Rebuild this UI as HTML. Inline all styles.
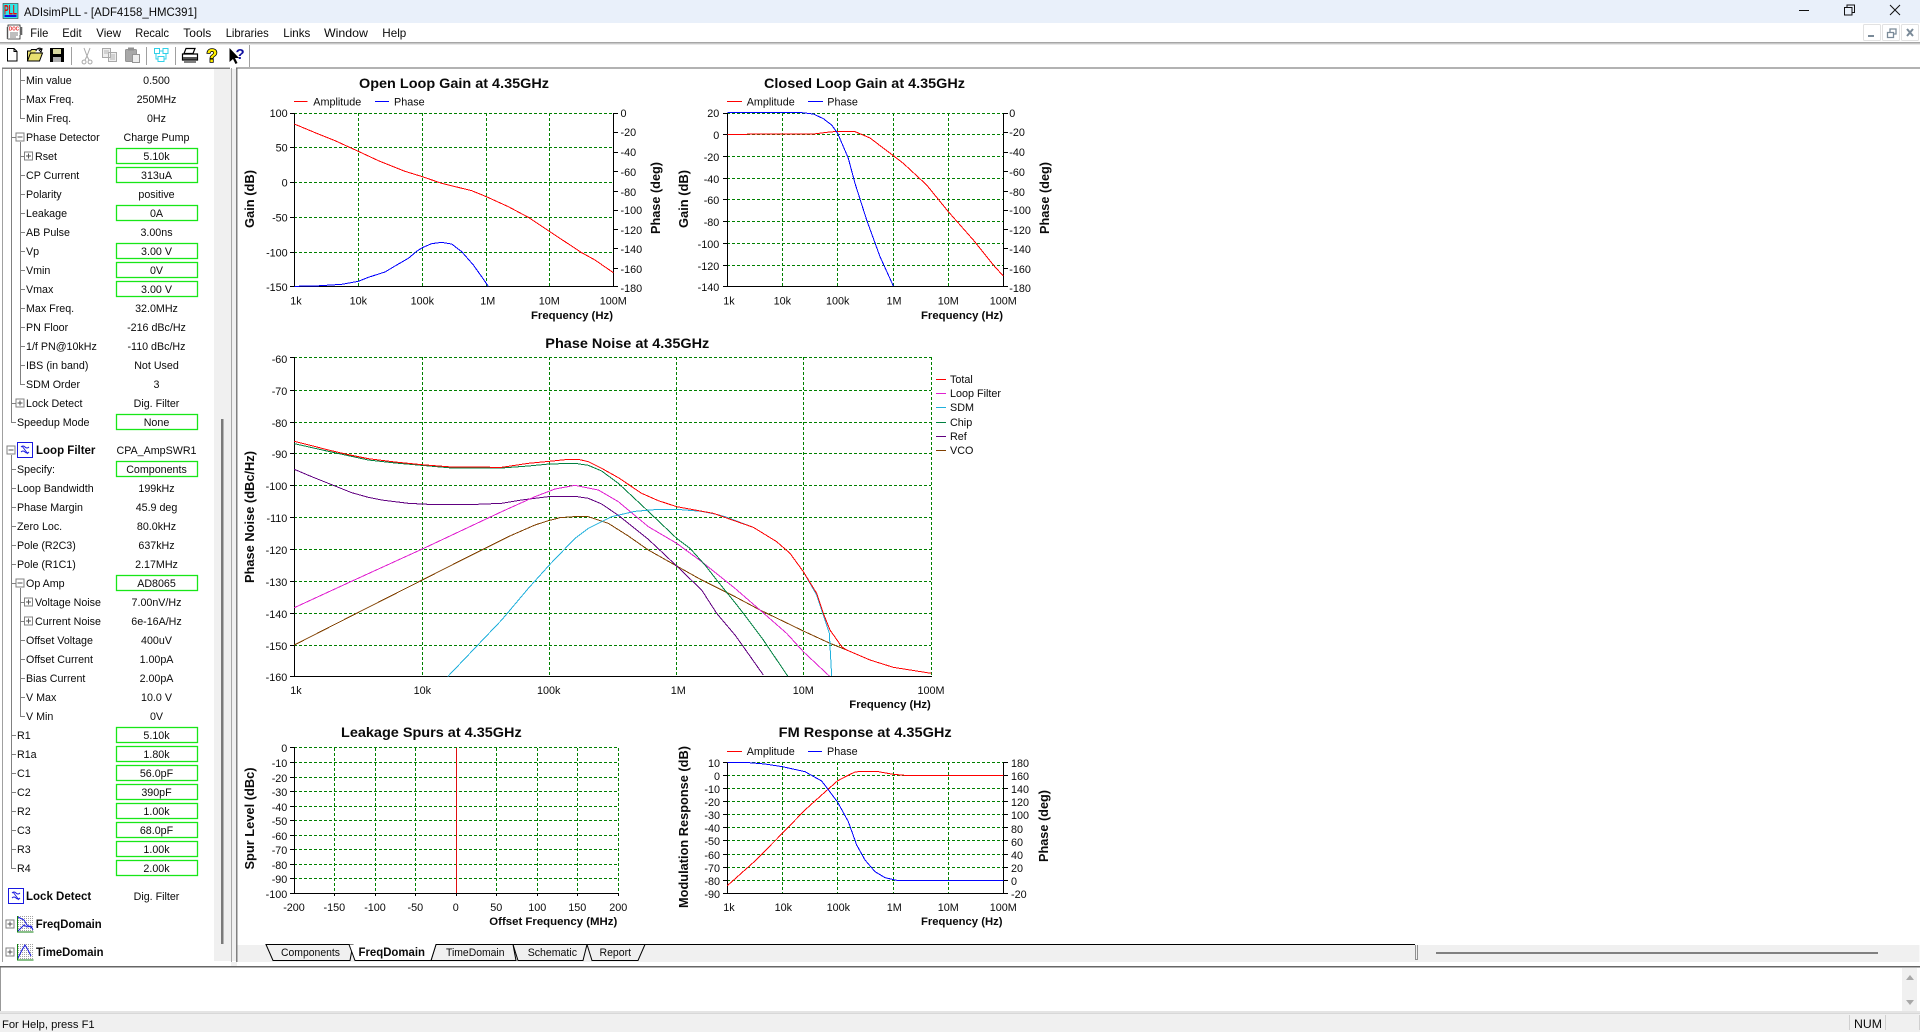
<!DOCTYPE html>
<html lang="en">
<head>
<meta charset="utf-8">
<title>ADIsimPLL - [ADF4158_HMC391]</title>
<style>
html,body{margin:0;padding:0;background:#fff;width:1920px;height:1032px;overflow:hidden}
svg{display:block;font-family:"Liberation Sans",Arial,sans-serif}
text{fill:#0a0a0a}
.s{font-size:10.7px}
.v{font-size:10.7px;text-anchor:middle}
.b{font-size:11.5px;font-weight:bold}
.m{font-size:12px}
.t{font-size:10.8px}
.e{text-anchor:end}
.c{text-anchor:middle}
.ti{font-size:14px;font-weight:bold}
.xl{font-size:11.3px;font-weight:bold}
.yl{font-size:13px;font-weight:bold}
.g{fill:none;stroke:#008000;stroke-width:1;stroke-dasharray:3 2}
.a{fill:none;stroke:#000;stroke-width:1}
.tr{fill:none;stroke:#808080;stroke-width:1}
.gb{fill:none;stroke:#18e618;stroke-width:1.3}
.l{fill:none;stroke-width:1;vector-effect:non-scaling-stroke;stroke-linejoin:round;shape-rendering:crispEdges}
.pb{fill:#fff;stroke:#808080;stroke-width:1}
</style>
</head>
<body>
<svg width="1920" height="1032" viewBox="0 0 1920 1032" xmlns="http://www.w3.org/2000/svg">
<defs>
<pattern id="dots" width="2" height="2" patternUnits="userSpaceOnUse"><rect width="1" height="1" fill="#a0a0a0"/></pattern>
</defs>
<rect width="1920" height="1032" fill="#fff"/>
<!-- title bar -->
<rect width="1920" height="23" fill="#e9f0fa"/>
<rect x="3" y="3.5" width="15" height="15" fill="#30e8e8" stroke="#333" stroke-width=".6"/>
<text x="4" y="14.500" style="font-size:14px;font-weight:bold;fill:#e80808" textLength="13" lengthAdjust="spacingAndGlyphs">PLL</text>
<rect x="4.500" y="15" width="12" height="2" fill="#1010e0"/>
<text x="24" y="16" style="font-size:12px" textLength="173" lengthAdjust="spacingAndGlyphs">ADIsimPLL - [ADF4158_HMC391]</text>
<path d="M1799 10.5h10" stroke="#111" fill="none"/>
<path d="M1844.5 7.500h7.500v7.500h-7.500zM1847 7.500v-2.500h7.500v7.500h-2.500" stroke="#111" fill="none"/>
<path d="M1890 5l10 10M1900 5l-10 10" stroke="#111" fill="none"/>
<!-- menu -->
<path d="M8 25h12v2l2 1-2 1 2 1-2 1 2 1-2 1 2 1-2 1v4H8l-1-1 1-1-1-1 1-1-1-1 1-1-1-1 1-1-1-1 1-1-1-1 1-1z" fill="#fff" stroke="#222" stroke-width=".8"/>
<text x="9" y="30.500" style="font-size:5.500px;font-weight:bold;fill:#e02020" textLength="10" lengthAdjust="spacingAndGlyphs">DOC</text>
<path d="M10 33h8M10 35h8M10 37h6" stroke="#555" stroke-width=".7"/>
<g class="m">
<text x="30.300" y="37" textLength="18" lengthAdjust="spacingAndGlyphs">File</text>
<text x="62.300" y="37" textLength="19.300" lengthAdjust="spacingAndGlyphs">Edit</text>
<text x="96.300" y="37" textLength="24.700" lengthAdjust="spacingAndGlyphs">View</text>
<text x="135.300" y="37" textLength="33.700" lengthAdjust="spacingAndGlyphs">Recalc</text>
<text x="183.300" y="37" textLength="28" lengthAdjust="spacingAndGlyphs">Tools</text>
<text x="225.700" y="37" textLength="43" lengthAdjust="spacingAndGlyphs">Libraries</text>
<text x="283.300" y="37" textLength="27" lengthAdjust="spacingAndGlyphs">Links</text>
<text x="324" y="37" textLength="44" lengthAdjust="spacingAndGlyphs">Window</text>
<text x="382.300" y="37" textLength="24" lengthAdjust="spacingAndGlyphs">Help</text>
</g>
<g fill="#fff" stroke="#e2e2e2">
<rect x="1863.500" y="24.500" width="17" height="16" rx="1"/>
<rect x="1882.500" y="24.500" width="17" height="16" rx="1"/>
<rect x="1901.500" y="24.500" width="17" height="16" rx="1"/>
</g>
<path d="M1868 36h6" stroke="#7a8a98" stroke-width="2"/>
<path d="M1887.500 32.500h6v5h-6zM1890 32v-3h6v5h-2" stroke="#7a8a98" stroke-width="1.300" fill="none"/>
<path d="M1907 29l6 7M1913 29l-6 7" stroke="#7a8a98" stroke-width="2" fill="none"/>
<rect y="42" width="1920" height="1.500" fill="#a6a6a6"/>
<rect y="43.500" width="1920" height="1.500" fill="#e8e8e8"/>
<!-- toolbar -->
<path d="M7.500 48.500h6.500l3 3v9.500h-9.500z" fill="#fff" stroke="#000"/>
<path d="M14 48.500v3h3" fill="none" stroke="#000"/>
<path d="M27.500 61l3-8h12l-3 8zM27.500 61v-10h3l1-1.500h4l1 1.500" fill="#e8e070" stroke="#000"/>
<path d="M36 50q3-3 6-1M42 49l-1 3-2-2z" fill="none" stroke="#000"/>
<rect x="50" y="48" width="14" height="14" fill="#000"/>
<rect x="53" y="49" width="8" height="5" fill="#d8d8a0"/>
<rect x="53" y="57" width="8" height="5" fill="#b0b0b0"/>
<rect x="71" y="47" width="1" height="18" fill="#a0a0a0"/>
<path d="M84 48l3 8 3-8M84 60a2 2 0 1 0 .1 0M90 60a2 2 0 1 0 .1 0M87 56l-2 4M87 56l2 4" fill="none" stroke="#a8a8a8" stroke-width="1"/>
<path d="M102.500 48.500h8v9h-8zM108.500 52.500h8v9h-8z" fill="#eee" stroke="#a8a8a8"/>
<path d="M104 51h5M104 53h5M110 55h5M110 57h5M110 59h5" stroke="#b4b4b4" fill="none"/>
<rect x="125.500" y="49.500" width="11" height="12" rx="1" fill="#a8a8a8" stroke="#949494"/>
<rect x="128" y="47.500" width="6" height="3" fill="#909090"/>
<rect x="132.500" y="54.500" width="7" height="8" fill="#eee" stroke="#949494"/>
<rect x="146" y="47" width="1" height="18" fill="#a0a0a0"/>
<path d="M154.500 48.500h5v5h-5zM163 48.500h5v5h-5zM159.500 51h3.500M158 56.500h6v5h-6zM156 53.500v5.500h2M166 53.500v5.500h-2" fill="none" stroke="#30d0e8" stroke-width="1"/>
<rect x="175" y="47" width="1" height="18" fill="#a0a0a0"/>
<path d="M186 48.500h9l-2 5h-9zM182.500 54h15v6h-15z" fill="#fff" stroke="#000" stroke-width="1.200"/>
<rect x="183" y="57" width="14" height="2.500" fill="#555"/>
<path d="M184 62h12" stroke="#000" stroke-width="1"/>
<text x="206.500" y="62" style="font-size:18px;font-weight:bold;fill:#ffee00;stroke:#000;stroke-width:1.600;paint-order:stroke">?</text>
<path d="M229.500 48v14l3.500-3 2.500 5 2-1-2.500-5h4z" fill="#000"/>
<text x="235.500" y="59" style="font-size:15px;font-weight:bold;fill:#1010a0">?</text>
<rect x="249" y="45" width="1" height="22" fill="#a0a0a0"/>
<!-- panes -->
<rect x="0" y="68" width="1920" height="899" fill="#fff"/>
<rect x="214" y="69" width="9" height="892" fill="#f0f0f0"/>
<rect x="223" y="69" width="13" height="892" fill="#f0f0f0"/>
<rect x="221" y="419" width="2.500" height="525" fill="#7a7a7a"/>
<rect x="2" y="68" width="1" height="894" fill="#a0a0a0"/>
<rect x="2" y="67.500" width="228" height="1.500" fill="#808080"/>
<rect x="231" y="68" width="1" height="894" fill="#a8a8a8"/>
<rect x="236" y="68" width="1.500" height="894" fill="#808080"/>
<rect x="236" y="67.500" width="1684" height="1" fill="#666"/>
<rect x="237.500" y="945" width="1682" height="17" fill="#f0f0f0"/>
<!-- tree lines -->
<path class="tr" d="M11.500 69V422.500H16M11.500 137.500H15.500M11.500 403.500H15.500"/>
<path class="tr" d="M20.500 69V118.500H25M20.500 80.500H25M20.500 99.500H25M20.500 142V384.500H25M20.500 175.500H25M20.500 194.500H25M20.500 213.500H25M20.500 232.500H25M20.500 251.500H25M20.500 270.500H25M20.500 289.500H25M20.500 308.500H25M20.500 327.500H25M20.500 346.500H25M20.500 365.500H25M20.500 156.500H24"/>
<path class="tr" d="M11.500 455V868.500H16M11.500 469.500H16M11.500 488.500H16M11.500 507.500H16M11.500 526.500H16M11.500 545.500H16M11.500 564.500H16M11.500 583.500H15.500M11.500 735.500H16M11.500 754.500H16M11.500 773.500H16M11.500 792.500H16M11.500 811.500H16M11.500 830.500H16M11.500 849.500H16"/>
<path class="tr" d="M20.500 588V716.500H25M20.500 602.500H24M20.500 621.500H24M20.500 640.500H25M20.500 659.500H25M20.500 678.500H25M20.500 697.500H25"/>
<!-- plus/minus boxes -->
<g>
<rect class="pb" x="16" y="133" width="8" height="8"/><path d="M17.500 137h5" stroke="#555"/>
<rect class="pb" x="24.500" y="152" width="8" height="8"/><path d="M26 156h5M28.500 153.500v5" stroke="#555"/>
<rect class="pb" x="16" y="399" width="8" height="8"/><path d="M17.500 403h5M20 400.500v5" stroke="#555"/>
<rect class="pb" x="7" y="446" width="8" height="8"/><path d="M8.500 450h5" stroke="#555"/>
<rect class="pb" x="16" y="579" width="8" height="8"/><path d="M17.500 583h5" stroke="#555"/>
<rect class="pb" x="24.500" y="598" width="8" height="8"/><path d="M26 602h5M28.500 599.500v5" stroke="#555"/>
<rect class="pb" x="24.500" y="617" width="8" height="8"/><path d="M26 621h5M28.500 618.500v5" stroke="#555"/>
<rect class="pb" x="6" y="920" width="8" height="8"/><path d="M7.500 924h5M10 921.500v5" stroke="#555"/>
<rect class="pb" x="6" y="948" width="8" height="8"/><path d="M7.500 952h5M10 949.500v5" stroke="#555"/>
</g>
<!-- green boxes -->
<g class="gb">
<rect x="116.500" y="148.500" width="81" height="15"/>
<rect x="116.500" y="167.500" width="81" height="15"/>
<rect x="116.500" y="205.500" width="81" height="15"/>
<rect x="116.500" y="243.500" width="81" height="15"/>
<rect x="116.500" y="262.500" width="81" height="15"/>
<rect x="116.500" y="281.500" width="81" height="15"/>
<rect x="116.500" y="414.500" width="81" height="15"/>
<rect x="116.500" y="461.500" width="81" height="15"/>
<rect x="116.500" y="575.500" width="81" height="15"/>
<rect x="116.500" y="727.500" width="81" height="15"/>
<rect x="116.500" y="746.500" width="81" height="15"/>
<rect x="116.500" y="765.500" width="81" height="15"/>
<rect x="116.500" y="784.500" width="81" height="15"/>
<rect x="116.500" y="803.500" width="81" height="15"/>
<rect x="116.500" y="822.500" width="81" height="15"/>
<rect x="116.500" y="841.500" width="81" height="15"/>
<rect x="116.500" y="860.500" width="81" height="15"/>
</g>
<!-- tree labels -->
<g class="s">
<text x="26" y="84">Min value</text>
<text x="26" y="103">Max Freq.</text>
<text x="26" y="122">Min Freq.</text>
<text x="26" y="141">Phase Detector</text>
<text x="35" y="160">Rset</text>
<text x="26" y="179">CP Current</text>
<text x="26" y="198">Polarity</text>
<text x="26" y="217">Leakage</text>
<text x="26" y="236">AB Pulse</text>
<text x="26" y="255">Vp</text>
<text x="26" y="274">Vmin</text>
<text x="26" y="293">Vmax</text>
<text x="26" y="312">Max Freq.</text>
<text x="26" y="331">PN Floor</text>
<text x="26" y="350">1/f PN@10kHz</text>
<text x="26" y="369">IBS (in band)</text>
<text x="26" y="388">SDM Order</text>
<text x="26" y="407">Lock Detect</text>
<text x="17" y="426">Speedup Mode</text>
<text x="17" y="473">Specify:</text>
<text x="17" y="492">Loop Bandwidth</text>
<text x="17" y="511">Phase Margin</text>
<text x="17" y="530">Zero Loc.</text>
<text x="17" y="549">Pole (R2C3)</text>
<text x="17" y="568">Pole (R1C1)</text>
<text x="26" y="587">Op Amp</text>
<text x="35" y="606">Voltage Noise</text>
<text x="35" y="625">Current Noise</text>
<text x="26" y="644">Offset Voltage</text>
<text x="26" y="663">Offset Current</text>
<text x="26" y="682">Bias Current</text>
<text x="26" y="701">V Max</text>
<text x="26" y="720">V Min</text>
<text x="17" y="739">R1</text>
<text x="17" y="758">R1a</text>
<text x="17" y="777">C1</text>
<text x="17" y="796">C2</text>
<text x="17" y="815">R2</text>
<text x="17" y="834">C3</text>
<text x="17" y="853">R3</text>
<text x="17" y="872">R4</text>
</g>
<g class="v">
<text x="156.500" y="84">0.500</text>
<text x="156.500" y="103">250MHz</text>
<text x="156.500" y="122">0Hz</text>
<text x="156.500" y="141">Charge Pump</text>
<text x="156.500" y="160">5.10k</text>
<text x="156.500" y="179">313uA</text>
<text x="156.500" y="198">positive</text>
<text x="156.500" y="217">0A</text>
<text x="156.500" y="236">3.00ns</text>
<text x="156.500" y="255">3.00 V</text>
<text x="156.500" y="274">0V</text>
<text x="156.500" y="293">3.00 V</text>
<text x="156.500" y="312">32.0MHz</text>
<text x="156.500" y="331">-216 dBc/Hz</text>
<text x="156.500" y="350">-110 dBc/Hz</text>
<text x="156.500" y="369">Not Used</text>
<text x="156.500" y="388">3</text>
<text x="156.500" y="407">Dig. Filter</text>
<text x="156.500" y="426">None</text>
<text x="156.500" y="454">CPA_AmpSWR1</text>
<text x="156.500" y="473">Components</text>
<text x="156.500" y="492">199kHz</text>
<text x="156.500" y="511">45.9 deg</text>
<text x="156.500" y="530">80.0kHz</text>
<text x="156.500" y="549">637kHz</text>
<text x="156.500" y="568">2.17MHz</text>
<text x="156.500" y="587">AD8065</text>
<text x="156.500" y="606">7.00nV/Hz</text>
<text x="156.500" y="625">6e-16A/Hz</text>
<text x="156.500" y="644">400uV</text>
<text x="156.500" y="663">1.00pA</text>
<text x="156.500" y="682">2.00pA</text>
<text x="156.500" y="701">10.0 V</text>
<text x="156.500" y="720">0V</text>
<text x="156.500" y="739">5.10k</text>
<text x="156.500" y="758">1.80k</text>
<text x="156.500" y="777">56.0pF</text>
<text x="156.500" y="796">390pF</text>
<text x="156.500" y="815">1.00k</text>
<text x="156.500" y="834">68.0pF</text>
<text x="156.500" y="853">1.00k</text>
<text x="156.500" y="872">2.00k</text>
<text x="156.500" y="900">Dig. Filter</text>
</g>
<rect x="17.500" y="442.500" width="15" height="15" fill="#fff" stroke="#1818e0"/>
<path d="M21 447q2-2 4 0t4 0M21 452q2-2 4 0t4 0M22 446l6 8" fill="none" stroke="#1818e0" stroke-width=".9"/>
<text class="b" x="36" y="454">Loop Filter</text>
<rect x="8.500" y="888.500" width="15" height="15" fill="#fff" stroke="#1818e0"/>
<path d="M12 893q2-2 4 0t4 0M12 898q2-2 4 0t4 0M13 892l6 8" fill="none" stroke="#1818e0" stroke-width=".9"/>
<text class="b" x="26" y="900">Lock Detect</text>
<rect x="17" y="916" width="16" height="16" fill="url(#dots)"/>
<path d="M17.500 916v16h16" fill="none" stroke="#108010"/>
<path d="M18 917l6 3 3 5 5 3" fill="none" stroke="#1818e0"/>
<path d="M18 931l6-6 3 2 4-1 2 4" fill="none" stroke="#1818e0"/>
<text class="b" x="35.700" y="928" textLength="66" lengthAdjust="spacingAndGlyphs">FreqDomain</text>
<rect x="17" y="944" width="16" height="16" fill="url(#dots)"/>
<path d="M17.500 944v16h16" fill="none" stroke="#108010"/>
<path d="M18 958l4-8 3-5 3 5 3 6" fill="none" stroke="#1818e0"/>
<text class="b" x="36" y="956" textLength="67.500" lengthAdjust="spacingAndGlyphs">TimeDomain</text>

<!-- ===== PLOT 1 ===== -->
<text class="ti" x="359" y="88" textLength="190" lengthAdjust="spacingAndGlyphs">Open Loop Gain at 4.35GHz</text>
<path d="M294 101.500h13.500" stroke="#f00"/><path d="M375 101.500h14" stroke="#00f"/>
<text class="t" x="313.300" y="105.500">Amplitude</text><text class="t" x="394" y="105.500">Phase</text>
<path class="g" d="M294 113.500H613M294 147.500H613M294 182.500H613M294 217.500H613M294 252.500H613M358.500 113V286M422.500 113V286M486.500 113V286M549.500 113V286"/>
<path class="a" d="M294.500 113V287M294 286.500H614M613.500 113V287"/>
<path class="a" d="M290 113.500h4M290 147.500h4M290 182.500h4M290 217.500h4M290 252.500h4M290 286.500h4M613 113.500h5M613 132.500h5M613 152.500h5M613 171.500h5M613 191.500h5M613 210.500h5M613 229.500h5M613 248.500h5M613 268.500h5M613 286.500h5"/>
<g transform="translate(235 70) scale(.33333)">
<path class="l" stroke="#00f" d="M178 649L240 648 320 643 370 634 400 622 450 606 480 588 520 565 545 544 562 533 590 521 620 517 650 522 680 545 715 585 740 620 760 649"/>
<path class="l" stroke="#f00" d="M178 162L245 190 300 212 370 244 430 272 510 304 562 320 620 340 710 362 754 380 820 410 880 442 943 484 1040 548 1080 570 1135 608"/>
</g>
<g class="t e">
<text x="287.700" y="117">100</text><text x="287.700" y="151.500">50</text><text x="287.700" y="186.500">0</text><text x="287.700" y="221.500">-50</text><text x="287.700" y="256.500">-100</text><text x="287.700" y="291">-150</text>
</g>
<g class="t">
<text x="620.500" y="117">0</text><text x="620.500" y="136">-20</text><text x="620.500" y="156">-40</text><text x="620.500" y="176">-60</text><text x="620.500" y="196">-80</text><text x="620.500" y="214">-100</text><text x="620.500" y="234">-120</text><text x="620.500" y="253">-140</text><text x="620.500" y="273">-160</text><text x="620.500" y="292">-180</text>
</g>
<g class="t c">
<text x="296" y="304.500">1k</text><text x="358.300" y="304.500">10k</text><text x="422.300" y="304.500">100k</text><text x="487.700" y="304.500">1M</text><text x="549.300" y="304.500">10M</text><text x="613.300" y="304.500">100M</text>
</g>
<text class="xl" x="531" y="319" textLength="82" lengthAdjust="spacingAndGlyphs">Frequency (Hz)</text>
<text class="yl" transform="translate(254 228) rotate(-90)" textLength="58" lengthAdjust="spacingAndGlyphs">Gain (dB)</text>
<text class="yl" transform="translate(660 234) rotate(-90)" textLength="72" lengthAdjust="spacingAndGlyphs">Phase (deg)</text>

<!-- ===== PLOT 2 ===== -->
<text class="ti" x="764" y="88" textLength="201" lengthAdjust="spacingAndGlyphs">Closed Loop Gain at 4.35GHz</text>
<path d="M727 101.500h15" stroke="#f00"/><path d="M808 101.500h15" stroke="#00f"/>
<text class="t" x="746.700" y="105.500">Amplitude</text><text class="t" x="827.300" y="105.500">Phase</text>
<path class="g" d="M727 113.500H1003M727 134.500H1003M727 156.500H1003M727 178.500H1003M727 199.500H1003M727 221.500H1003M727 243.500H1003M727 265.500H1003M782.500 113V286M837.500 113V286M893.500 113V286M948.500 113V286"/>
<path class="a" d="M727.500 113V287M727 286.500H1004M1003.500 113V287"/>
<path class="a" d="M723 113.500h4M723 134.500h4M723 156.500h4M723 178.500h4M723 199.500h4M723 221.500h4M723 243.500h4M723 265.500h4M723 286.500h4M1003 113.500h5M1003 132.500h5M1003 152.500h5M1003 171.500h5M1003 191.500h5M1003 210.500h5M1003 229.500h5M1003 248.500h5M1003 268.500h5M1003 286.500h5"/>
<g transform="translate(680 70) scale(.33333)">
<path class="l" stroke="#f00" d="M142 193L400 192 440 187 473 184 523 184 570 204 640 257 670 280 740 345 805 425 880 510 940 585 970 618"/>
<path class="l" stroke="#00f" d="M142 128L365 128 400 132 430 146 455 165 473 190 505 265 525 340 560 450 600 560 640 648"/>
</g>
<g class="t e">
<text x="719.300" y="117">20</text><text x="719.300" y="139">0</text><text x="719.300" y="161">-20</text><text x="719.300" y="183">-40</text><text x="719.300" y="204">-60</text><text x="719.300" y="226">-80</text><text x="719.300" y="248">-100</text><text x="719.300" y="270">-120</text><text x="719.300" y="291">-140</text>
</g>
<g class="t">
<text x="1009.300" y="117">0</text><text x="1009.300" y="136">-20</text><text x="1009.300" y="156">-40</text><text x="1009.300" y="176">-60</text><text x="1009.300" y="196">-80</text><text x="1009.300" y="214">-100</text><text x="1009.300" y="234">-120</text><text x="1009.300" y="253">-140</text><text x="1009.300" y="273">-160</text><text x="1009.300" y="292">-180</text>
</g>
<g class="t c">
<text x="729" y="304.500">1k</text><text x="782.300" y="304.500">10k</text><text x="837.700" y="304.500">100k</text><text x="894" y="304.500">1M</text><text x="948.300" y="304.500">10M</text><text x="1003.300" y="304.500">100M</text>
</g>
<text class="xl" x="921" y="319" textLength="82" lengthAdjust="spacingAndGlyphs">Frequency (Hz)</text>
<text class="yl" transform="translate(688 228) rotate(-90)" textLength="58" lengthAdjust="spacingAndGlyphs">Gain (dB)</text>
<text class="yl" transform="translate(1049 234) rotate(-90)" textLength="72" lengthAdjust="spacingAndGlyphs">Phase (deg)</text>

<!-- ===== PLOT 3 ===== -->
<text class="ti" x="545.300" y="348" textLength="164" lengthAdjust="spacingAndGlyphs">Phase Noise at 4.35GHz</text>
<path class="g" d="M294 357.500H931M294 390.500H931M294 422.500H931M294 453.500H931M294 485.500H931M294 517.500H931M294 549.500H931M294 581.500H931M294 613.500H931M294 645.500H931M422.500 357V676M549.500 357V676M676.500 357V676M803.500 357V676M931.500 357V676"/>
<path class="a" d="M294.500 357V677M294 676.500H932"/>
<path class="a" d="M290 357.500h4M290 390.500h4M290 422.500h4M290 453.500h4M290 485.500h4M290 517.500h4M290 549.500h4M290 581.500h4M290 613.500h4M290 645.500h4M290 676.500h4"/>
<g transform="translate(235 330) scale(.33333)">
<path class="l" stroke="#804000" d="M178 945L280 893 400 832 562 750 700 680 820 620 900 585 940 572 975 563 1030 559 1060 560 1120 580 1180 618 1240 660 1325 708 1400 750 1500 800 1575 840 1705 903 1785 940 1835 960"/>
<path class="l" stroke="#600080" d="M178 418L230 440 280 460 350 488 400 502 440 510 520 520 580 523 700 524 800 520 860 510 940 500 1020 499 1060 505 1100 522 1150 556 1240 628 1325 708 1400 780 1445 850 1500 915 1525 950 1585 1035"/>
<path class="l" stroke="#e020d0" d="M178 833L280 786 380 740 562 657 800 545 900 500 960 477 1020 466 1090 480 1150 515 1240 590 1325 640 1400 695 1500 775 1575 840 1655 910 1705 965 1783 1038"/>
<path class="l" stroke="#008040" d="M178 341L280 364 400 390 480 399 560 406 650 414 800 414 880 408 943 402 1020 400 1060 406 1100 423 1150 460 1225 530 1325 625 1365 655 1410 705 1445 750 1500 818 1525 850 1585 930 1658 1038"/>
<path class="l" stroke="#20b0dc" d="M638 1040L700 975 800 870 880 775 943 705 1020 625 1060 595 1130 560 1200 544 1270 538 1325 538 1400 544 1440 552 1470 560 1555 592 1625 635 1665 670 1705 725 1745 795 1765 855 1783 910 1790 1038"/>
<path class="l" stroke="#f00" d="M178 334L230 347 280 360 340 374 400 386 480 396 560 404 650 411 800 412 880 400 943 394 1000 388 1030 388 1060 395 1100 415 1150 443 1220 490 1270 512 1325 530 1435 550 1555 592 1625 635 1665 670 1705 725 1745 790 1765 850 1785 900 1820 950 1835 960 1905 990 1975 1012 2089 1030"/>
</g>
<g class="t e">
<text x="287.300" y="363">-60</text><text x="287.300" y="395">-70</text><text x="287.300" y="427">-80</text><text x="287.300" y="458">-90</text><text x="287.300" y="490">-100</text><text x="287.300" y="522">-110</text><text x="287.300" y="554">-120</text><text x="287.300" y="586">-130</text><text x="287.300" y="618">-140</text><text x="287.300" y="650">-150</text><text x="287.300" y="681">-160</text>
</g>
<g class="t c">
<text x="296" y="694">1k</text><text x="422.300" y="694">10k</text><text x="548.700" y="694">100k</text><text x="678.300" y="694">1M</text><text x="803.300" y="694">10M</text><text x="931" y="694">100M</text>
</g>
<text class="xl" x="849.300" y="708" textLength="81.500" lengthAdjust="spacingAndGlyphs">Frequency (Hz)</text>
<text class="yl" transform="translate(254 583) rotate(-90)" textLength="132" lengthAdjust="spacingAndGlyphs">Phase Noise (dBc/Hz)</text>
<path d="M936 379.500h10" stroke="#f00"/><path d="M936 393.500h10" stroke="#e020d0"/><path d="M936 407.500h10" stroke="#20b0dc"/><path d="M936 422.500h10" stroke="#008040"/><path d="M936 436.500h10" stroke="#600080"/><path d="M936 450.500h10" stroke="#804000"/>
<g class="t">
<text x="950" y="383">Total</text><text x="950" y="397">Loop Filter</text><text x="950" y="411">SDM</text><text x="950" y="426">Chip</text><text x="950" y="440">Ref</text><text x="950" y="454">VCO</text>
</g>

<!-- ===== PLOT 4 ===== -->
<text class="ti" x="341" y="737" textLength="180.700" lengthAdjust="spacingAndGlyphs">Leakage Spurs at 4.35GHz</text>
<path class="g" d="M294 747.500H618M294 762.500H618M294 777.500H618M294 791.500H618M294 806.500H618M294 820.500H618M294 835.500H618M294 849.500H618M294 864.500H618M294 878.500H618M334.500 748V893M375.500 748V893M415.500 748V893M496.500 748V893M537.500 748V893M577.500 748V893M618.500 748V893"/>
<path class="a" d="M294.500 747V894M294 893.500H619"/>
<path class="a" d="M290 747.500h4M290 762.500h4M290 777.500h4M290 791.500h4M290 806.500h4M290 820.500h4M290 835.500h4M290 849.500h4M290 864.500h4M290 878.500h4M290 893.500h4M334.500 893v3M375.500 893v3M415.500 893v3M456.500 893v3M496.500 893v3M537.500 893v3M577.500 893v3M618.500 893v3"/>
<path d="M456.500 748V893" stroke="#e01010" stroke-width="1"/>
<g class="t e">
<text x="287.300" y="752">0</text><text x="287.300" y="767">-10</text><text x="287.300" y="782">-20</text><text x="287.300" y="796">-30</text><text x="287.300" y="811">-40</text><text x="287.300" y="825">-50</text><text x="287.300" y="840">-60</text><text x="287.300" y="854">-70</text><text x="287.300" y="869">-80</text><text x="287.300" y="883">-90</text><text x="287.300" y="898">-100</text>
</g>
<g class="t c">
<text x="294" y="911">-200</text><text x="334.300" y="911">-150</text><text x="375" y="911">-100</text><text x="415.300" y="911">-50</text><text x="455.700" y="911">0</text><text x="496.300" y="911">50</text><text x="537.300" y="911">100</text><text x="577.300" y="911">150</text><text x="618.300" y="911">200</text>
</g>
<text class="xl" x="489.300" y="925" textLength="128" lengthAdjust="spacingAndGlyphs">Offset Frequency (MHz)</text>
<text class="yl" transform="translate(254 869.500) rotate(-90)" textLength="102" lengthAdjust="spacingAndGlyphs">Spur Level (dBc)</text>

<!-- ===== PLOT 5 ===== -->
<text class="ti" x="778.700" y="737" textLength="173" lengthAdjust="spacingAndGlyphs">FM Response at 4.35GHz</text>
<path d="M727 751.500h15" stroke="#f00"/><path d="M808 751.500h14" stroke="#00f"/>
<text class="t" x="746.700" y="755">Amplitude</text><text class="t" x="827" y="755">Phase</text>
<path class="g" d="M727 762.500H1003M727 775.500H1003M727 788.500H1003M727 801.500H1003M727 814.500H1003M727 827.500H1003M727 840.500H1003M727 854.500H1003M727 867.500H1003M727 880.500H1003M782.500 762V893M837.500 762V893M893.500 762V893M948.500 762V893"/>
<path class="a" d="M727.500 762V894M727 893.500H1004M1003.500 762V894"/>
<path class="a" d="M723 762.500h4M723 775.500h4M723 788.500h4M723 801.500h4M723 814.500h4M723 827.500h4M723 840.500h4M723 854.500h4M723 867.500h4M723 880.500h4M723 893.500h4M1003 762.500h5M1003 775.500h5M1003 788.500h5M1003 801.500h5M1003 814.500h5M1003 827.500h5M1003 840.500h5M1003 854.500h5M1003 867.500h5M1003 880.500h5M1003 893.500h5"/>
<g transform="translate(665 715) scale(.33333)">
<path class="l" stroke="#f00" d="M187 512L270 438 352 355 420 285 470 240 517 198 545 183 570 171 590 169 640 170 685 178 720 181 1015 181"/>
<path class="l" stroke="#00f" d="M187 142L240 142 300 147 352 155 420 170 470 198 517 260 550 320 575 390 600 435 630 470 660 488 695 496 1015 496"/>
</g>
<g class="t e">
<text x="720" y="767">10</text><text x="720" y="780">0</text><text x="720" y="793">-10</text><text x="720" y="806">-20</text><text x="720" y="819">-30</text><text x="720" y="832">-40</text><text x="720" y="845">-50</text><text x="720" y="859">-60</text><text x="720" y="872">-70</text><text x="720" y="885">-80</text><text x="720" y="898">-90</text>
</g>
<g class="t">
<text x="1011" y="767">180</text><text x="1011" y="780">160</text><text x="1011" y="793">140</text><text x="1011" y="806">120</text><text x="1011" y="819">100</text><text x="1011" y="833">80</text><text x="1011" y="846">60</text><text x="1011" y="859">40</text><text x="1011" y="872">20</text><text x="1011" y="885">0</text><text x="1011" y="898">-20</text>
</g>
<g class="t c">
<text x="729" y="911">1k</text><text x="783.300" y="911">10k</text><text x="838.300" y="911">100k</text><text x="894.300" y="911">1M</text><text x="948.300" y="911">10M</text><text x="1003.300" y="911">100M</text>
</g>
<text class="xl" x="921" y="925" textLength="81.500" lengthAdjust="spacingAndGlyphs">Frequency (Hz)</text>
<text class="yl" transform="translate(688 908) rotate(-90)" textLength="162" lengthAdjust="spacingAndGlyphs">Modulation Response (dB)</text>
<text class="yl" transform="translate(1048 862) rotate(-90)" textLength="72" lengthAdjust="spacingAndGlyphs">Phase (deg)</text>

<!-- ===== TABS ===== -->
<path d="M437 944.500H1415" stroke="#000"/>
<path d="M1415.500 945V959M1417.500 945V959.500H1415" fill="none" stroke="#909090"/>
<rect x="1436" y="952" width="442" height="2" fill="#808080"/>
<path d="M266 944.500L273 960.500H350L353 944.500Z" fill="#f0f0f0" stroke="#000"/>
<path d="M513 944.500L518 960.500H583L587 944.500Z" fill="#f0f0f0" stroke="#000"/>
<path d="M587 944.500L592 960.500H638L645 944.500Z" fill="#f0f0f0" stroke="#000"/>
<path d="M436 944.500L431 960.500H516L513 944.500Z" fill="#f0f0f0" stroke="#000"/>
<path d="M349 944.500L355 960.500H431L436 944.500" fill="#fff" stroke="#000"/>
<g style="font-size:11px">
<text x="281" y="956" textLength="59" lengthAdjust="spacingAndGlyphs">Components</text>
<text x="446" y="956" textLength="58.500" lengthAdjust="spacingAndGlyphs">TimeDomain</text>
<text x="527.700" y="956" textLength="49.300" lengthAdjust="spacingAndGlyphs">Schematic</text>
<text x="599.500" y="956" textLength="31.500" lengthAdjust="spacingAndGlyphs">Report</text>
</g>
<text x="358.500" y="956" style="font-size:11.500px;font-weight:bold" textLength="66.500" lengthAdjust="spacingAndGlyphs">FreqDomain</text>

<!-- ===== OUTPUT + STATUS ===== -->
<rect x="0" y="962" width="1920" height="4" fill="#fff"/>
<rect x="231" y="962" width="6" height="4" fill="#f0f0f0"/>
<rect x="0" y="966" width="1920" height="1.500" fill="#666"/>
<rect x="0" y="967.500" width="1" height="44" fill="#999"/>
<rect x="1902" y="968" width="15" height="43" fill="#f0f0f0"/>
<path d="M1906 980l4-5 4 5z" fill="#a8a8a8"/>
<path d="M1906 1000l4 5 4-5z" fill="#a8a8a8"/>
<rect x="0" y="1011" width="1920" height="2" fill="#e4e4e4"/>
<rect x="0" y="1013" width="1920" height="19" fill="#f0f0f0"/>
<rect x="0" y="1013" width="1920" height="1" fill="#d8d8d8"/>
<text x="2" y="1028" style="font-size:11.200px">For Help, press F1</text>
<rect x="1849" y="1015" width="1" height="15" fill="#d0d0d0"/>
<rect x="1885" y="1015" width="1" height="15" fill="#d0d0d0"/>
<rect x="1919" y="1015" width="1" height="15" fill="#d0d0d0"/>
<text x="1854" y="1028" style="font-size:11.500px" textLength="28" lengthAdjust="spacingAndGlyphs">NUM</text>
</svg>
</body>
</html>
